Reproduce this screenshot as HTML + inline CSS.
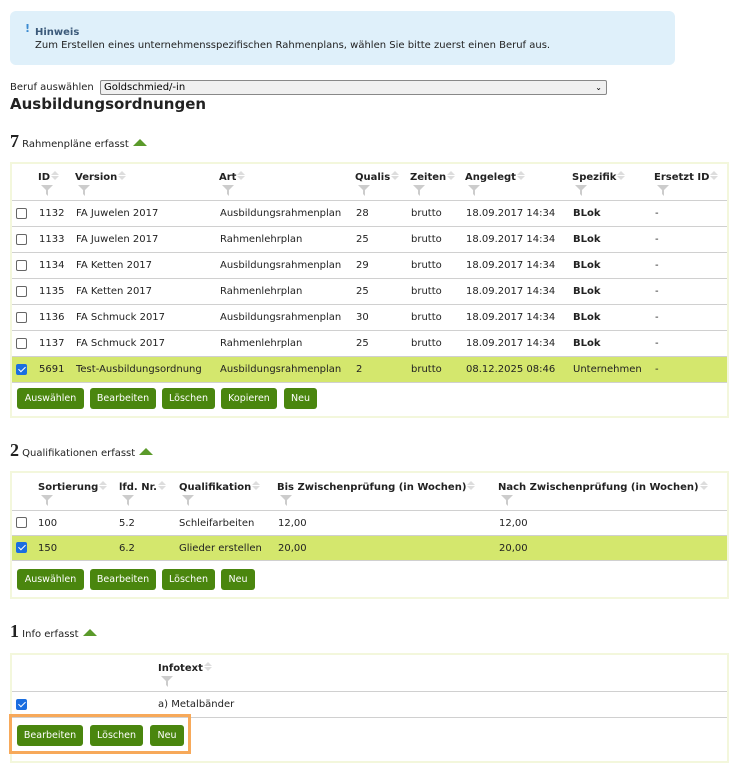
<!DOCTYPE html>
<html><head><meta charset="utf-8"><style>
*{box-sizing:border-box;margin:0;padding:0}
body{width:735px;height:760px;background:#fff;font-family:"DejaVu Sans","Liberation Sans",sans-serif;font-size:10px;color:#222;position:relative;overflow:hidden}
.a{position:absolute;white-space:nowrap}
.hint{left:10px;top:11px;width:665px;height:54px;background:#dff0fa;border-radius:6px}
.box{position:absolute;border:2px solid #f3f7dc}
.row{position:absolute;left:0;right:0;height:26px;border-bottom:1px solid #d0d0d0}
.row.sel{background:#d4e76d}
.row span{position:absolute;top:7px;white-space:nowrap}
.hdr span{position:absolute;white-space:nowrap;font-weight:bold}
.btn{position:absolute;height:21px;background:#4a860e;color:#fff;border-radius:3px;text-align:center;line-height:21px;font-size:9.5px}
.cb{position:absolute;width:11px;height:11px;border:1px solid #666;border-radius:2px;background:#fff}
.cb.on{background:#1a6ee0;border-color:#1a6ee0}
.cb.on:after{content:"";position:absolute;left:3px;top:0px;width:3px;height:6px;border:solid #fff;border-width:0 1.6px 1.6px 0;transform:rotate(45deg)}
.sec{font-size:10px}
.sec b{font-family:"Liberation Serif",serif;font-size:18px;font-weight:bold}
.tri{display:inline-block;width:0;height:0;border-left:7px solid transparent;border-right:7px solid transparent;border-bottom:7px solid #5b9a2a;margin-left:4px;vertical-align:1px}
.sa{display:inline-block;width:8px;height:10px;vertical-align:-1px;margin-left:1px;position:relative}
.sa:before{content:"";position:absolute;left:0;top:0;border-left:4px solid transparent;border-right:4px solid transparent;border-bottom:4px solid #ddd}
.sa:after{content:"";position:absolute;left:0;top:5px;border-left:4px solid transparent;border-right:4px solid transparent;border-top:4px solid #ddd}
.fl{position:absolute;width:12px;height:11px}
</style></head><body>
<div class="a hint"></div>
<div class="a" style="left:25px;top:22px;color:#3a8ad0;font-weight:bold;font-size:11px">!</div>
<div class="a" style="left:35px;top:27px;font-weight:bold;color:#3c5a7a">Hinweis</div>
<div class="a" style="left:35px;top:40px">Zum Erstellen eines unternehmensspezifischen Rahmenplans, wählen Sie bitte zuerst einen Beruf aus.</div>
<div class="a" style="left:10px;top:82px">Beruf auswählen</div>
<div class="a" style="left:100px;top:80px;width:507px;height:15px;border:1px solid #888;border-radius:2px;background:#f0f0f0;padding-left:3px;line-height:13px;color:#000">Goldschmied/-in<span style="position:absolute;right:4px;top:0;font-size:8px">&#8964;</span></div>
<div class="a" style="left:10px;top:95px;font-size:15px;font-weight:bold">Ausbildungsordnungen</div>

<div class="a sec" style="left:10px;top:131px"><b>7</b> Rahmenpläne erfasst<span class="tri"></span></div>
<div class="box" style="left:10px;top:162px;width:719px;height:256px">
 <div class="hdr" style="position:absolute;left:0;right:0;top:0;height:37px;border-bottom:1px solid #d0d0d0">
  <span style="left:26px;top:7px">ID<i class="sa"></i></span>
  <span style="left:63px;top:7px">Version<i class="sa"></i></span>
  <span style="left:207px;top:7px">Art<i class="sa"></i></span>
  <span style="left:343px;top:7px">Qualis<i class="sa"></i></span>
  <span style="left:398px;top:7px">Zeiten<i class="sa"></i></span>
  <span style="left:453px;top:7px">Angelegt<i class="sa"></i></span>
  <span style="left:560px;top:7px">Spezifik<i class="sa"></i></span>
  <span style="left:642px;top:7px">Ersetzt ID<i class="sa"></i></span>
 </div>
 <div id="t1"></div>
 <div class="btn" style="left:5px;top:224px;width:67px">Auswählen</div>
 <div class="btn" style="left:78px;top:224px;width:66px">Bearbeiten</div>
 <div class="btn" style="left:150px;top:224px;width:53px">Löschen</div>
 <div class="btn" style="left:209px;top:224px;width:56px">Kopieren</div>
 <div class="btn" style="left:272px;top:224px;width:33px">Neu</div>
</div>

<div class="a sec" style="left:10px;top:440px"><b>2</b> Qualifikationen erfasst<span class="tri"></span></div>
<div class="box" style="left:10px;top:471px;width:719px;height:128px">
 <div class="hdr" style="position:absolute;left:0;right:0;top:0;height:38px;border-bottom:1px solid #d0d0d0">
  <span style="left:26px;top:8px">Sortierung<i class="sa"></i></span>
  <span style="left:107px;top:8px">lfd. Nr.<i class="sa"></i></span>
  <span style="left:167px;top:8px">Qualifikation<i class="sa"></i></span>
  <span style="left:265px;top:8px">Bis Zwischenprüfung (in Wochen)<i class="sa"></i></span>
  <span style="left:486px;top:8px">Nach Zwischenprüfung (in Wochen)<i class="sa"></i></span>
 </div>
 <div class="row" style="top:38px;height:25px"><i class="cb" style="left:4px;top:6px"></i><span style="left:26px">100</span><span style="left:107px">5.2</span><span style="left:167px">Schleifarbeiten</span><span style="left:266px">12,00</span><span style="left:487px">12,00</span></div>
 <div class="row sel" style="top:63px;height:25px"><i class="cb on" style="left:4px;top:6px"></i><span style="left:26px">150</span><span style="left:107px">6.2</span><span style="left:167px">Glieder erstellen</span><span style="left:266px">20,00</span><span style="left:487px">20,00</span></div>
 <div class="btn" style="left:5px;top:96px;width:67px">Auswählen</div>
 <div class="btn" style="left:78px;top:96px;width:66px">Bearbeiten</div>
 <div class="btn" style="left:150px;top:96px;width:53px">Löschen</div>
 <div class="btn" style="left:209px;top:96px;width:34px">Neu</div>
</div>

<div class="a sec" style="left:10px;top:621px"><b>1</b> Info erfasst<span class="tri"></span></div>
<div class="box" style="left:10px;top:653px;width:719px;height:110px">
 <div class="hdr" style="position:absolute;left:0;right:0;top:0;height:37px;border-bottom:1px solid #d0d0d0">
  <span style="left:146px;top:7px">Infotext<i class="sa"></i></span>
 </div>
 <div class="row" style="top:37px;height:26px"><i class="cb on" style="left:4px;top:7px"></i><span style="left:146px">a) Metalbänder</span></div>
 <div class="btn" style="left:5px;top:70px;width:66px">Bearbeiten</div>
 <div class="btn" style="left:78px;top:70px;width:53px">Löschen</div>
 <div class="btn" style="left:138px;top:70px;width:34px">Neu</div>
</div>
<div class="a" style="left:9px;top:714px;width:182px;height:40px;border:3px solid #f7a95a"></div>

<svg width="0" height="0" style="position:absolute"></svg>
<script>
var d=[["1132","FA Juwelen 2017","Ausbildungsrahmenplan","28"],["1133","FA Juwelen 2017","Rahmenlehrplan","25"],["1134","FA Ketten 2017","Ausbildungsrahmenplan","29"],["1135","FA Ketten 2017","Rahmenlehrplan","25"],["1136","FA Schmuck 2017","Ausbildungsrahmenplan","30"],["1137","FA Schmuck 2017","Rahmenlehrplan","25"]];
var h="";
d.forEach(function(r,i){h+='<div class="row" style="top:'+(37+i*26)+'px"><i class="cb" style="left:4px;top:7px"></i><span style="left:27px">'+r[0]+'</span><span style="left:64px">'+r[1]+'</span><span style="left:208px">'+r[2]+'</span><span style="left:344px">'+r[3]+'</span><span style="left:399px">brutto</span><span style="left:454px">18.09.2017 14:34</span><span style="left:561px;font-weight:bold">BLok</span><span style="left:643px">-</span></div>';});
h+='<div class="row sel" style="top:193px"><i class="cb on" style="left:4px;top:7px"></i><span style="left:27px">5691</span><span style="left:64px">Test-Ausbildungsordnung</span><span style="left:208px">Ausbildungsrahmenplan</span><span style="left:344px">2</span><span style="left:399px">brutto</span><span style="left:454px">08.12.2025 08:46</span><span style="left:561px">Unternehmen</span><span style="left:643px">-</span></div>';
document.getElementById("t1").innerHTML=h;
document.querySelectorAll(".hdr span").forEach(function(s){var f=document.createElementNS("http://www.w3.org/2000/svg","svg");f.setAttribute("class","fl");f.setAttribute("viewBox","0 0 12 11");f.innerHTML='<path d="M0 0H12L7 5V11L5 9V5Z" fill="#ccc"/>';f.style.left=(parseInt(s.style.left)+3)+"px";f.style.top=(parseInt(s.style.top)+14)+"px";s.parentNode.appendChild(f);});
</script>
</body></html>
